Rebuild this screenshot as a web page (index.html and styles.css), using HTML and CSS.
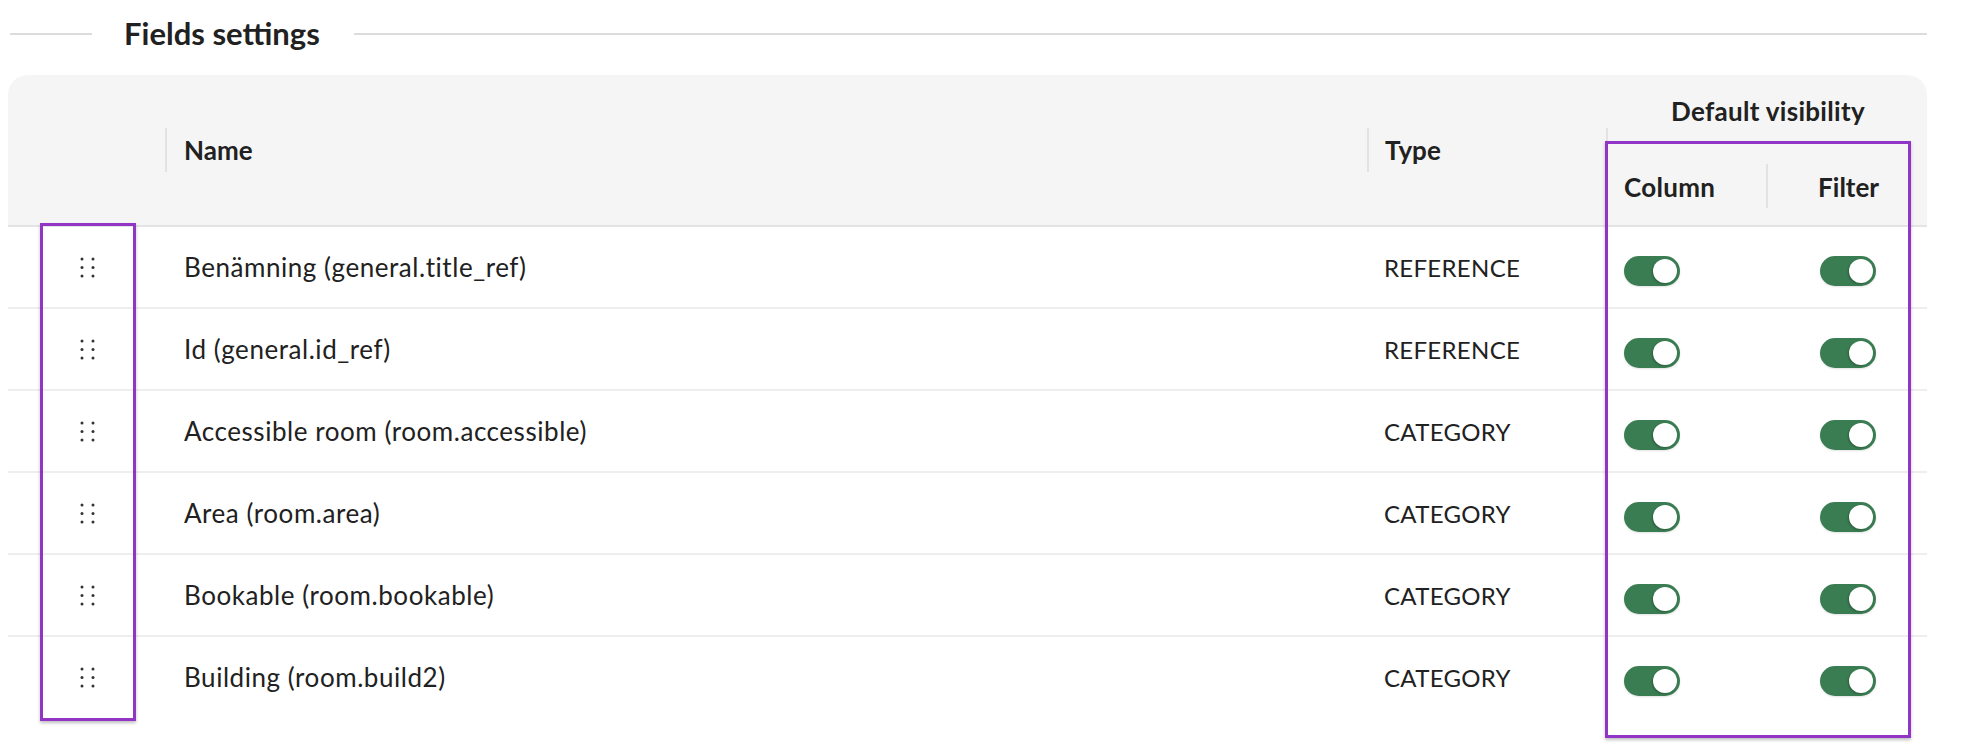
FILE: index.html
```html
<!DOCTYPE html>
<html lang="en">
<head>
<meta charset="utf-8">
<title>Fields settings</title>
<link rel="stylesheet" href="styles.css">
</head>
<body>
<div class="page">
  <div class="legend">
    <span class="legend-line legend-line-left"></span>
    <h2 class="legend-title">Fields settings</h2>
    <span class="legend-line legend-line-right"></span>
  </div>

  <div class="grid-card">
    <div class="grid-head">
      <div class="hcell hcell-handle"></div>
      <div class="hcell hcell-name sep-left">Name</div>
      <div class="hcell hcell-type sep-left sep-right">Type</div>
      <div class="hcell hcell-group">Default visibility</div>
      <div class="hcell hcell-column">Column</div>
      <div class="hcell hcell-filter sep-left-sub">Filter</div>
    </div>

    <div class="grid-body">
      <div class="row">
        <div class="cell cell-handle"><svg class="handle" width="15" height="21" viewBox="0 0 15 21"><circle cx="2" cy="2" r="1.5"/><circle cx="13" cy="2" r="1.5"/><circle cx="2" cy="10.5" r="1.5"/><circle cx="13" cy="10.5" r="1.5"/><circle cx="2" cy="19" r="1.5"/><circle cx="13" cy="19" r="1.5"/></svg></div>
        <div class="cell cell-name">Benämning (general.title_ref)</div>
        <div class="cell cell-type">REFERENCE</div>
        <div class="cell cell-column"><span class="toggle"><span class="knob"></span></span></div>
        <div class="cell cell-filter"><span class="toggle"><span class="knob"></span></span></div>
      </div>
      <div class="row">
        <div class="cell cell-handle"><svg class="handle" width="15" height="21" viewBox="0 0 15 21"><circle cx="2" cy="2" r="1.5"/><circle cx="13" cy="2" r="1.5"/><circle cx="2" cy="10.5" r="1.5"/><circle cx="13" cy="10.5" r="1.5"/><circle cx="2" cy="19" r="1.5"/><circle cx="13" cy="19" r="1.5"/></svg></div>
        <div class="cell cell-name">Id (general.id_ref)</div>
        <div class="cell cell-type">REFERENCE</div>
        <div class="cell cell-column"><span class="toggle"><span class="knob"></span></span></div>
        <div class="cell cell-filter"><span class="toggle"><span class="knob"></span></span></div>
      </div>
      <div class="row">
        <div class="cell cell-handle"><svg class="handle" width="15" height="21" viewBox="0 0 15 21"><circle cx="2" cy="2" r="1.5"/><circle cx="13" cy="2" r="1.5"/><circle cx="2" cy="10.5" r="1.5"/><circle cx="13" cy="10.5" r="1.5"/><circle cx="2" cy="19" r="1.5"/><circle cx="13" cy="19" r="1.5"/></svg></div>
        <div class="cell cell-name">Accessible room (room.accessible)</div>
        <div class="cell cell-type">CATEGORY</div>
        <div class="cell cell-column"><span class="toggle"><span class="knob"></span></span></div>
        <div class="cell cell-filter"><span class="toggle"><span class="knob"></span></span></div>
      </div>
      <div class="row">
        <div class="cell cell-handle"><svg class="handle" width="15" height="21" viewBox="0 0 15 21"><circle cx="2" cy="2" r="1.5"/><circle cx="13" cy="2" r="1.5"/><circle cx="2" cy="10.5" r="1.5"/><circle cx="13" cy="10.5" r="1.5"/><circle cx="2" cy="19" r="1.5"/><circle cx="13" cy="19" r="1.5"/></svg></div>
        <div class="cell cell-name">Area (room.area)</div>
        <div class="cell cell-type">CATEGORY</div>
        <div class="cell cell-column"><span class="toggle"><span class="knob"></span></span></div>
        <div class="cell cell-filter"><span class="toggle"><span class="knob"></span></span></div>
      </div>
      <div class="row">
        <div class="cell cell-handle"><svg class="handle" width="15" height="21" viewBox="0 0 15 21"><circle cx="2" cy="2" r="1.5"/><circle cx="13" cy="2" r="1.5"/><circle cx="2" cy="10.5" r="1.5"/><circle cx="13" cy="10.5" r="1.5"/><circle cx="2" cy="19" r="1.5"/><circle cx="13" cy="19" r="1.5"/></svg></div>
        <div class="cell cell-name">Bookable (room.bookable)</div>
        <div class="cell cell-type">CATEGORY</div>
        <div class="cell cell-column"><span class="toggle"><span class="knob"></span></span></div>
        <div class="cell cell-filter"><span class="toggle"><span class="knob"></span></span></div>
      </div>
      <div class="row row-last">
        <div class="cell cell-handle"><svg class="handle" width="15" height="21" viewBox="0 0 15 21"><circle cx="2" cy="2" r="1.5"/><circle cx="13" cy="2" r="1.5"/><circle cx="2" cy="10.5" r="1.5"/><circle cx="13" cy="10.5" r="1.5"/><circle cx="2" cy="19" r="1.5"/><circle cx="13" cy="19" r="1.5"/></svg></div>
        <div class="cell cell-name">Building (room.build2)</div>
        <div class="cell cell-type">CATEGORY</div>
        <div class="cell cell-column"><span class="toggle"><span class="knob"></span></span></div>
        <div class="cell cell-filter"><span class="toggle"><span class="knob"></span></span></div>
      </div>
    </div>
  </div>

  <div class="highlight highlight-handles"></div>
  <div class="highlight highlight-visibility"></div>
</div>
</body>
</html>
```

FILE: styles.css
```css
* { box-sizing: border-box; }

html, body {
  margin: 0;
  padding: 0;
  background: #ffffff;
}

body {
  font-family: "Lato", "Noto Sans", sans-serif;
  color: #212121;
}

.page {
  position: relative;
  padding: 0 35px 0 8px;
  width: 1962px;
  height: 746px;
}

/* ---------- legend title ---------- */
.legend {
  display: flex;
  align-items: center;
  height: 68px;
}

.legend-line {
  height: 2px;
  background: #dcdcdc;
}

.legend-line-left {
  width: 82px;
  margin-left: 2px;
}

.legend-line-right {
  flex: 1;
}

.legend-title {
  margin: 0;
  padding: 0 34px 0 32px;
  font-size: 31px;
  font-weight: 700;
  line-height: 36px;
  color: #212121;
  position: relative;
  top: -1px;
}

/* ---------- card ---------- */
.grid-card {
  margin-top: 7px;
  width: 1919px;
}

.grid-head {
  display: grid;
  grid-template-columns: 158px 1202px 239px 160px 160px;
  grid-template-rows: 76px 74px;
  background: #f5f5f5;
  border-radius: 20px 20px 0 0;
  border-bottom: 2px solid #e4e4e4;
  font-weight: 700;
  font-size: 26px;
}

.hcell {
  position: relative;
  display: flex;
  align-items: center;
}

.hcell-handle { grid-column: 1; grid-row: 1 / 3; }
.hcell-name   { grid-column: 2; grid-row: 1 / 3; padding-left: 18px; }
.hcell-type   { grid-column: 3; grid-row: 1 / 3; padding-left: 17px; }
.hcell-group  {
  grid-column: 4 / 6;
  grid-row: 1;
  justify-content: center;
  padding-bottom: 4px;
  padding-left: 2px;
  letter-spacing: 0.3px;
}
.hcell-column { grid-column: 4; grid-row: 2; padding-left: 17px; padding-bottom: 2px; letter-spacing: 0.3px; }
.hcell-filter {
  grid-column: 5;
  grid-row: 2;
  justify-content: flex-end;
  padding-right: 48px;
  padding-bottom: 2px;
}

.sep-left::before,
.sep-right::after,
.sep-left-sub::before {
  content: "";
  position: absolute;
  top: 50%;
  width: 2px;
  height: 44px;
  margin-top: -22px;
  background: #e2e2e2;
}

.sep-left::before { left: -1px; }
.sep-right::after { right: -1px; }
.sep-left-sub::before { left: -1px; margin-top: -24px; }

/* ---------- body rows ---------- */
.row {
  display: grid;
  grid-template-columns: 158px 1202px 239px 160px 160px;
  height: 82px;
  border-bottom: 2px solid #eeeeee;
  font-size: 26px;
  letter-spacing: 0.55px;
}

.row-last { border-bottom: none; height: 80px; }

.cell {
  display: flex;
  align-items: center;
}

.cell-handle { justify-content: center; padding-left: 1px; }
.cell-name { padding-left: 18px; }
.cell-type { padding-left: 16px; font-size: 24px; letter-spacing: 0.3px; }
.cell-column { padding-left: 17px; }
.cell-filter { justify-content: flex-end; padding-right: 51px; }

.handle { fill: #333333; display: block; }

/* ---------- toggle ---------- */
.toggle {
  position: relative;
  display: inline-block;
  width: 56px;
  height: 30px;
  margin-top: 8px;
  border-radius: 15px;
  background: #3a7d52;
  box-shadow: 0 1px 2px rgba(0, 0, 0, 0.12);
}

.knob {
  position: absolute;
  top: 3px;
  right: 3px;
  width: 24px;
  height: 24px;
  border-radius: 50%;
  background: #ffffff;
  box-shadow: -1px 1px 2px rgba(0, 0, 0, 0.25);
}

/* ---------- annotation overlays ---------- */
.highlight {
  position: absolute;
  border: 3px solid #9135c6;
  box-shadow: 0 2px 3px rgba(0, 0, 0, 0.25);
  pointer-events: none;
}

.highlight-handles {
  left: 40px;
  top: 223px;
  width: 96px;
  height: 498px;
}

.highlight-visibility {
  left: 1605px;
  top: 141px;
  width: 306px;
  height: 597px;
}
```
